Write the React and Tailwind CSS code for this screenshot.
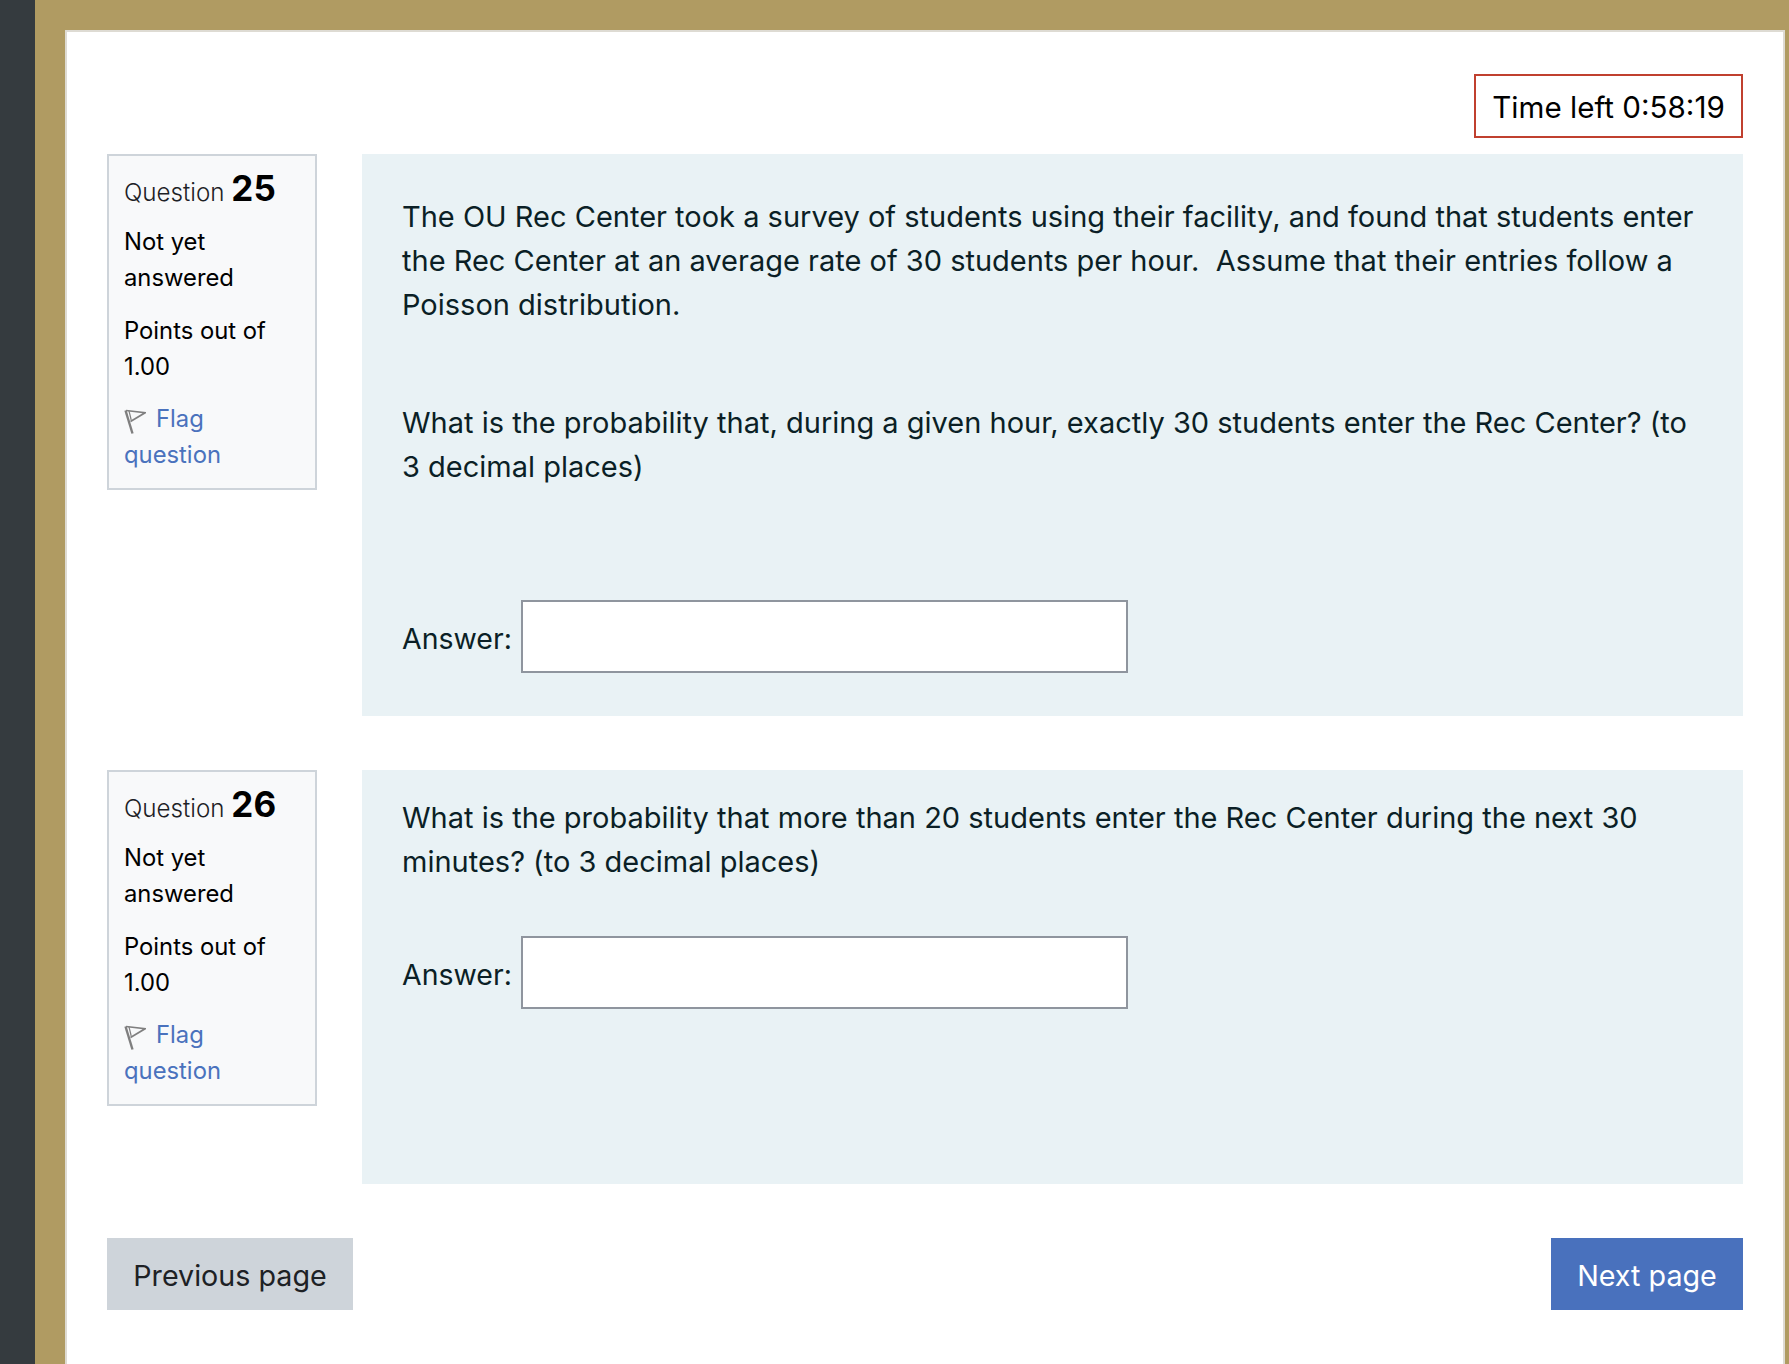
const font = "font-['Inter','Liberation_Sans',sans-serif]";

function FlagIcon() {
  return (
    <svg width="22" height="26" viewBox="0 0 22 26" fill="none" className="inline-block align-[-8px] mr-[10px]">
      <path d="M1.5 1.5 L8.5 24.5" stroke="#7f7f7f" strokeWidth="2.4" />
      <path d="M2 1.5 L21 3.8 L6.5 12.5" stroke="#7f7f7f" strokeWidth="1.6" />
      <path d="M5 1.8 L7.2 11" stroke="#7f7f7f" strokeWidth="1.2" />
    </svg>
  );
}

function QuestionInfo({ num }) {
  return (
    <div className="w-[210px] h-[336px] shrink-0 bg-[#f8f9fa] border-2 border-[#ced4da] px-[15px] text-[23.8px] leading-[36px] text-black">
      <h3 className="h-[68px] pt-[11px] font-light whitespace-nowrap">
        <span className="text-[24.2px] text-[#1d2125]">Question </span>
        <span className="text-[35px] font-bold leading-[42px]">{num}</span>
      </h3>
      <div>Not yet answered</div>
      <div className="mt-[17px]">Points out of 1.00</div>
      <div className="mt-[16px] text-[#4a72bd]">
        <FlagIcon />
        Flag question
      </div>
    </div>
  );
}

function AnswerRow({ className }) {
  return (
    <div className={`flex items-center gap-[9px] ${className}`}>
      <label className="text-[28.5px] pt-[4px]">Answer:</label>
      <input type="text" className="w-[607px] h-[73px] bg-white border-2 border-[#8f959e]" />
    </div>
  );
}

export default function App() {
  return (
    <div className={`flex h-[1364px] overflow-hidden bg-[#b09b62] ${font}`}>
      <div className="w-[35px] shrink-0 bg-[#353b3f]" />
      <div className="flex-1 pt-[30px] pl-[30px] pr-[4px]">
        <div className="h-full bg-white border-2 border-b-0 border-[#dedbd3] pt-[42px] px-[40px]">
          <div className="flex justify-end mb-[16px]">
            <div className="h-[64px] w-[269px] flex items-center justify-center border-2 border-[#c0402f] pt-[3px] text-[29.6px] text-black">
              Time left 0:58:19
            </div>
          </div>

          <div className="flex gap-[45px] mb-[54px]">
            <QuestionInfo num="25" />
            <div className="flex-1 bg-[#e9f2f5] text-[#0b1f26] text-[29px] leading-[44px] pt-[41px] pb-[43px] pl-[40px] pr-[42px]">
              <p>
                The OU Rec Center took a survey of students using their facility, and found that students enter the Rec Center at an average rate of 30 students per hour.&nbsp; Assume that their entries follow a Poisson distribution.
              </p>
              <p className="mt-[74px]">
                What is the probability that, during a given hour, exactly 30 students enter the Rec Center? (to 3 decimal places)
              </p>
              <AnswerRow className="mt-[111px]" />
            </div>
          </div>

          <div className="flex gap-[45px] mb-[54px]">
            <QuestionInfo num="26" />
            <div className="flex-1 bg-[#e9f2f5] text-[#0b1f26] text-[29px] leading-[44px] pt-[26px] pb-[175px] pl-[40px] pr-[42px]">
              <p>
                What is the probability that more than 20 students enter the Rec Center during the next 30 minutes? (to 3 decimal places)
              </p>
              <AnswerRow className="mt-[52px]" />
            </div>
          </div>

          <div className="flex justify-between">
            <button className="h-[72px] w-[246px] pt-[3px] bg-[#ced4da] text-[#1d2125] text-[28.7px]">Previous page</button>
            <button className="h-[72px] w-[192px] pt-[3px] bg-[#4971bd] text-white text-[28.7px]">Next page</button>
          </div>
        </div>
      </div>
    </div>
  );
}
